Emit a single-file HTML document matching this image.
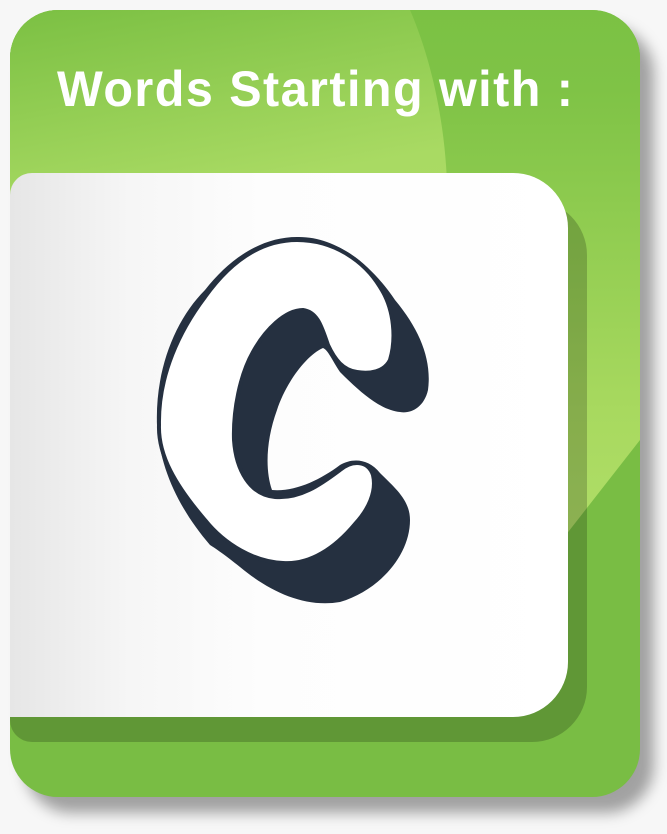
<!DOCTYPE html>
<html><head><style>
html,body{margin:0;padding:0;background:#f7f7f7;}
body{width:667px;height:834px;position:relative;overflow:hidden;font-family:"Liberation Sans",sans-serif;}
.card{position:absolute;left:10px;top:10px;width:630px;height:787px;border-radius:48px;background:#79bd44;overflow:hidden;box-shadow:14px 16px 14px rgba(0,0,0,0.35);}
.title{position:absolute;left:47px;top:50px;color:#fff;font-weight:bold;font-size:50px;white-space:nowrap;transform-origin:0 0;transform:scaleX(0.97);letter-spacing:1.5px;}
.dark{position:absolute;left:0;top:190px;width:577px;height:542px;background:rgba(0,0,0,0.2);border-radius:0 55px 55px 22px;}
.white{position:absolute;left:0;top:163px;width:558px;height:544px;background:linear-gradient(90deg,#e6e6e6 0px,#f6f6f6 120px,#fdfdfd 250px,#fff 100%);border-radius:22px 55px 55px 0;}
</style></head><body>
<div class="card">
<svg width="630" height="787" style="position:absolute;left:0;top:0">
<defs>
<linearGradient id="g" x1="0" y1="0" x2="0.15" y2="1"><stop offset="0" stop-color="#7bc043"/><stop offset="0.4" stop-color="#a9da63"/><stop offset="1" stop-color="#b0de68"/></linearGradient>
<linearGradient id="g2" x1="0" y1="0" x2="0" y2="1"><stop offset="0" stop-color="#7bc144"/><stop offset="0.15" stop-color="#7fc346"/><stop offset="0.75" stop-color="#a8d95f"/><stop offset="1" stop-color="#b0de68"/></linearGradient>
</defs>
<path d="M0,0 H630 V430 L548,535 H0 Z" fill="url(#g2)"/>
<path d="M0,0 H400 C430,70 440,150 437,220 L437,535 L0,535 Z" fill="url(#g)"/>
</svg>
<div class="dark"></div>
<div class="white"></div>
<div class="title">Words Starting with :</div>
<svg width="630" height="787" style="position:absolute;left:-10px;top:-10px" viewBox="0 0 630 787">
<path d="M297,237 C340,236 375,270 395,300 C420,330 432,360 428,390 C424,408 410,414 400,412 C380,410 360,392 340,372 C332,360 328,350 323,348 C305,356 285,385 277,410 C266,440 265,470 272,490 C295,492 320,480 340,465 C352,458 368,458 380,473 C395,488 410,500 410,520 C410,555 380,590 340,602 C305,608 270,592 240,567 C225,555 215,548 210,545 C180,510 160,470 157,425 C155,370 175,320 205,290 C230,258 262,237 297,237 Z" fill="#253040"/>
<path d="M297,240 C335,240 365,262 380,287 C395,310 396,340 390,360 C384,372 370,374 357,372 C343,370 335,360 328,345 C322,328 318,312 303,310 C285,310 265,330 253,352 C240,375 233,410 234,440 C236,470 250,495 275,497 C300,499 320,485 340,470 C352,460 368,460 373,475 C377,492 368,510 355,524 C335,548 310,565 283,563 C255,562 225,545 205,520 C175,485 158,455 159,425 C158,375 180,330 205,297 C230,262 260,240 297,240 Z" fill="#fff" stroke="#253040" stroke-width="4"/>
</svg>
</div>
</body></html>
